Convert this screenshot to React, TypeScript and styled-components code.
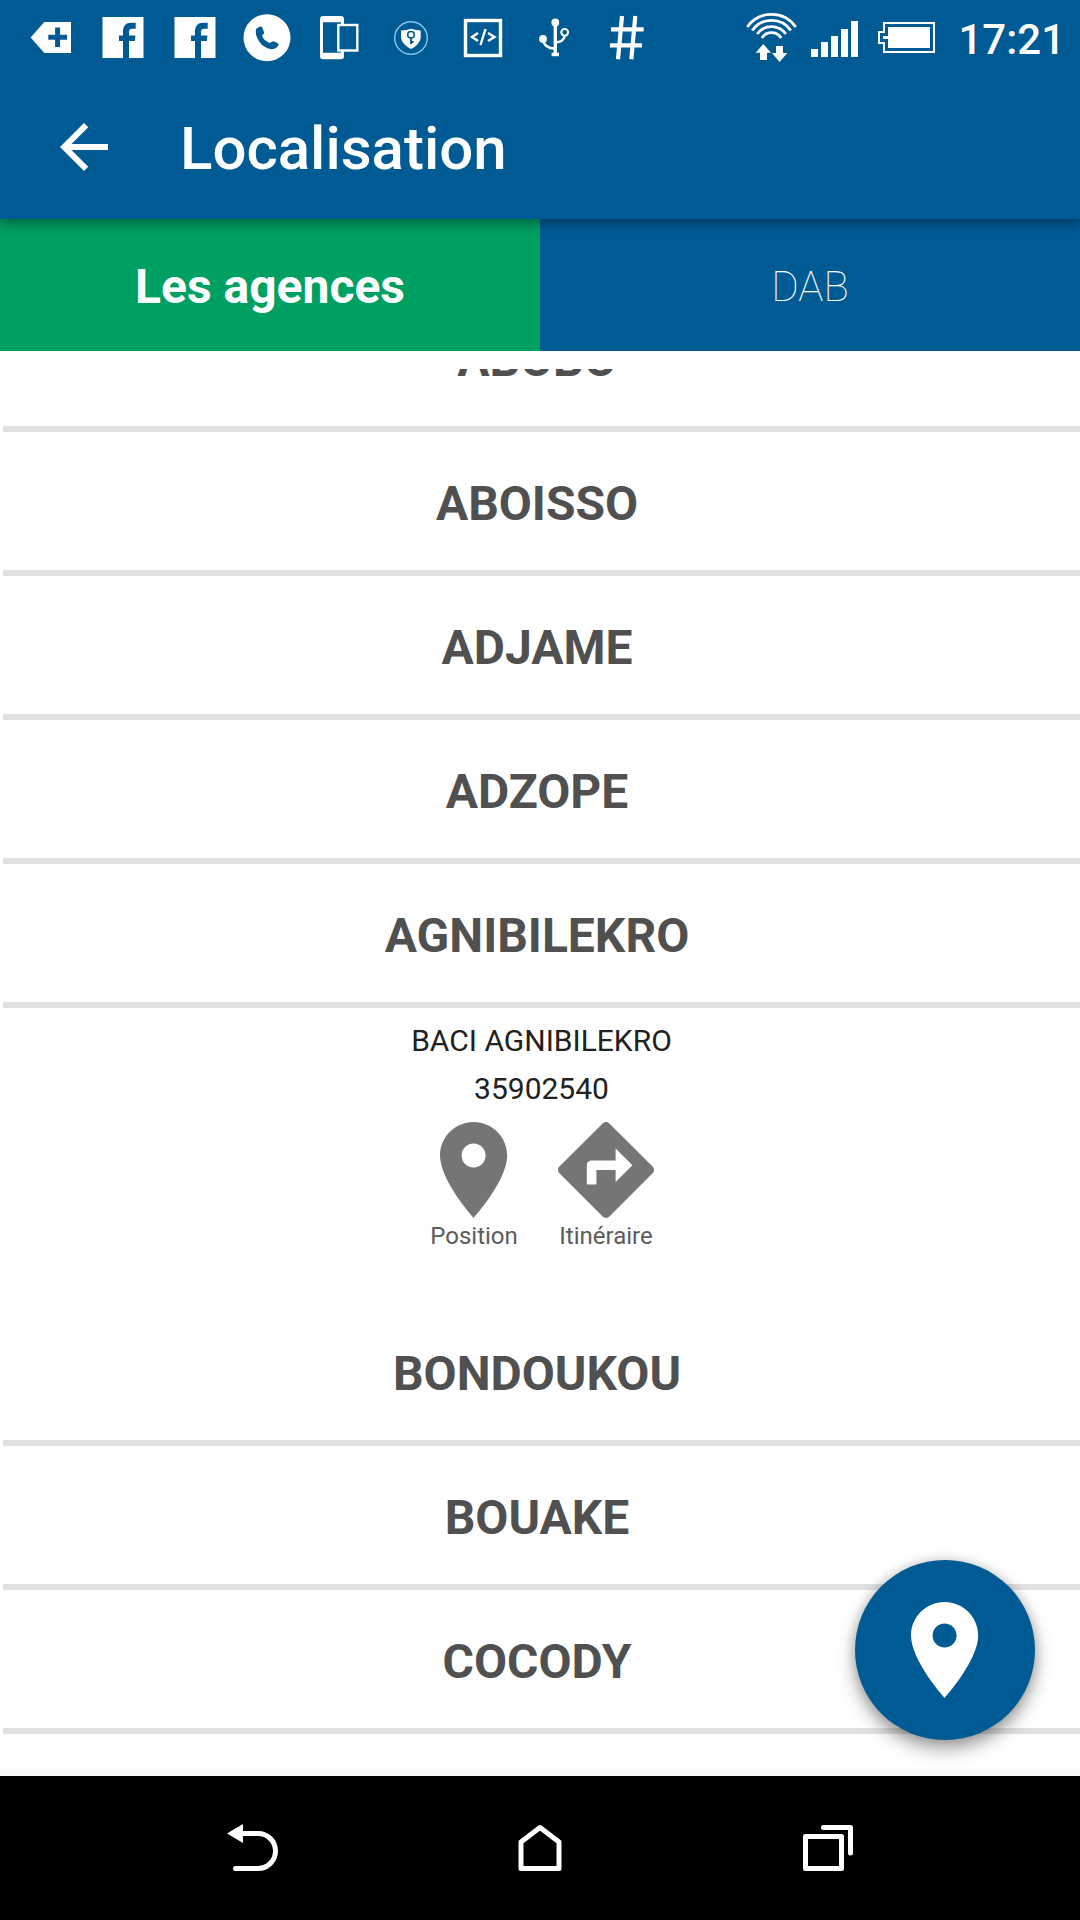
import React, { useState } from "react";
import styled, { createGlobalStyle } from "styled-components";

const BLUE = "#005a94";
const GREEN = "#009f62";

const GlobalStyle = createGlobalStyle`
  *, *::before, *::after { box-sizing: border-box; }
  body {
    margin: 0;
    background: #fff;
    font-family: Roboto, "Liberation Sans", sans-serif;
  }
  button {
    margin: 0;
    padding: 0;
    border: 0;
    background: none;
    color: inherit;
    font: inherit;
    cursor: pointer;
  }
`;

const Screen = styled.div`
  display: flex;
  flex-direction: column;
  height: 100vh;
  overflow: hidden;
  background: #fff;
`;

const Header = styled.header`
  position: relative;
  z-index: 1;
  background: ${BLUE};
  color: #fff;
  box-shadow: 0 4px 12px rgba(0, 0, 0, 0.4);
`;

const StatusBar = styled.div`
  display: flex;
  align-items: center;
  justify-content: space-between;
  height: 75px;
  padding: 0 15px;
`;

const StatusGroup = styled.div`
  display: flex;
  align-items: center;
`;

const StatusIcon = styled.svg`
  display: block;
  flex: none;
  height: 75px;
`;

const Clock = styled.time`
  padding-top: 4px;
  font-size: 42px;
  font-weight: 500;
  line-height: 48px;
`;

const AppBar = styled.div`
  display: flex;
  align-items: center;
  height: 144px;
`;

const BackButton = styled.button`
  display: flex;
  align-items: center;
  justify-content: center;
  width: 168px;
  height: 144px;
`;

const Title = styled.h1`
  margin: 0;
  padding: 4px 0 0 12px;
  font-size: 60px;
  font-weight: 500;
  line-height: 72px;
`;

const Tabs = styled.div`
  display: grid;
  grid-template-columns: 1fr 1fr;
  flex: none;
`;

const Tab = styled.button<{ $active: boolean }>`
  height: 132px;
  padding-top: 2px;
  background: ${(p) => (p.$active ? GREEN : BLUE)};
  color: #fff;
  font-size: ${(p) => (p.$active ? 48 : 42)}px;
  font-weight: ${(p) => (p.$active ? 700 : 100)};
`;

const Content = styled.main`
  position: relative;
  display: flex;
  flex-direction: column;
  flex: 1;
  min-height: 0;
  padding-top: 18px;
  border-bottom: 6px solid #f9f9f9;
`;

const Viewport = styled.div`
  flex: 1;
  min-height: 0;
  overflow: hidden;
`;

const CityList = styled.ul<{ $scrolled: number }>`
  margin: -${(p) => p.$scrolled}px 0 0;
  padding: 0 0 0 3px;
  list-style: none;
`;

const CityButton = styled.button`
  display: flex;
  align-items: center;
  justify-content: center;
  width: 100%;
  height: 144px;
  padding: 4px 9px 0 0;
  border-bottom: 6px solid #e1e1e1;
  color: #505050;
  font-size: 48px;
  font-weight: 700;
`;

const Details = styled.div`
  display: flex;
  flex-direction: column;
  align-items: center;
  padding: 9px 0 52px;
`;

const DetailLine = styled.p`
  margin: 0;
  color: #212121;
  font-size: 30px;
  line-height: 48px;
`;

const Actions = styled.div`
  display: grid;
  grid-template-columns: 132px 132px;
  padding: 9px 3px 0 0;
`;

const Action = styled.button`
  display: flex;
  flex-direction: column;
  align-items: center;
  gap: 4px;
  color: #5c5c5c;
  font-size: 24px;
  line-height: 28px;
`;

const ActionIcon = styled.svg`
  display: block;
  height: 96px;
  fill: #757575;
`;

const Fab = styled.button`
  position: absolute;
  right: 45px;
  bottom: 30px;
  display: flex;
  align-items: center;
  justify-content: center;
  width: 180px;
  height: 180px;
  border-radius: 50%;
  background: ${BLUE};
  box-shadow: 0 9px 18px rgba(0, 0, 0, 0.36), 0 0 12px rgba(0, 0, 0, 0.16);
`;

const FabIcon = styled(ActionIcon)`
  fill: #fff;
`;

const NavBar = styled.nav`
  display: grid;
  grid-template-columns: repeat(3, 1fr);
  flex: none;
  height: 144px;
  padding: 0 10%;
  background: #000;
`;

const NavButton = styled.button`
  display: flex;
  align-items: center;
  justify-content: center;
`;

const NavIcon = styled.svg`
  width: 72px;
  height: 72px;
  fill: none;
  stroke: #fff;
  stroke-width: 5;
  stroke-linecap: round;
  stroke-linejoin: round;
`;

const PIN = "M12 2C8.13 2 5 5.13 5 9c0 5.25 7 13 7 13s7-7.75 7-13c0-3.87-3.13-7-7-7zm0 9.5c-1.38 0-2.5-1.12-2.5-2.5s1.12-2.5 2.5-2.5 2.5 1.12 2.5 2.5-1.12 2.5-2.5 2.5z";
const DIRECTIONS = "M21.71 11.29l-9-9c-.39-.39-1.02-.39-1.41 0l-9 9c-.39.39-.39 1.02 0 1.41l9 9c.39.39 1.02.39 1.41 0l9-9c.39-.38.39-1.01 0-1.41zM14 14.5V12h-4v3H8v-4c0-.55.45-1 1-1h5V7.5l3.5 3.5-3.5 3.5z";

const Slot = ({ width = 72, children }: { width?: number; children: React.ReactNode }) => (
  <StatusIcon width={width} viewBox={`0 0 ${width} 75`} aria-hidden="true">
    {children}
  </StatusIcon>
);

const TagIcon = () => (
  <Slot>
    <path fill="#fff" d="M15.700 37.500L29.300 22H56V53H29.300Z" />
    <path stroke={BLUE} strokeWidth="5" d="M33.300 37.200H52M42.600 27.500V47" />
  </Slot>
);

const FacebookIcon = () => (
  <Slot>
    <rect x="15.500" y="17" width="41" height="41" fill="#fff" />
    <path
      fill={BLUE}
      d="M36 58V41H32V35.500H36V32C36 25.500 39 22.800 44 22.800H48.700V28.700H45.500C43 28.700 42 29.600 42 32V35.500H48.500L47.800 41H42V58Z"
    />
  </Slot>
);

const PhoneIcon = () => (
  <Slot>
    <circle cx="36" cy="37.700" r="23.500" fill="#fff" />
    <path
      fill={BLUE}
      d="M25.500 28.500L29 26.500Q30.500 26 31.200 27.500L33 32Q33.500 33.500 32.300 34.300L31 35.500Q32.500 40.500 38.500 43L41 41.800Q42 41 43.300 41.600L46.800 43.300Q48 44 47.300 45.500Q45 49.300 40.500 49.300Q32 48 27.500 40.500Q24 34 25 29.500Z"
    />
  </Slot>
);

const DevicesIcon = () => (
  <Slot>
    <path
      fill="#fff"
      fillRule="evenodd"
      d="M20 16H38Q41 16 41 19V56.300Q41 59.300 38 59.300H20Q17 59.300 17 56.300V19Q17 16 20 16ZM20 22.300V52.700H38V22.300Z"
    />
    <rect x="35.300" y="25" width="19" height="25.500" fill={BLUE} stroke="#fff" strokeWidth="2.400" />
  </Slot>
);

const ShieldIcon = () => (
  <Slot>
    <circle cx="36" cy="38" r="16.300" fill="none" stroke="#8cc4f0" strokeWidth="1.400" />
    <path fill="#fff" d="M26 30.500Q31 30.500 36 28.700Q41 30.500 45.700 30.500V38Q44.500 45 36 49Q27.500 45 26 38Z" />
    <circle cx="36" cy="34.800" r="3.300" fill="none" stroke={BLUE} strokeWidth="1.600" />
    <path stroke={BLUE} strokeWidth="1.800" d="M36 38V44M36 42H38.500" />
  </Slot>
);

const CodeIcon = () => (
  <Slot>
    <g fill="none" stroke="#fff">
      <rect x="18.500" y="20.500" width="35" height="35" strokeWidth="3.400" />
      <path strokeWidth="2.400" d="M31 33L25 37L31 41M41 33L47.500 37L41 41M38.500 29L33.500 45" />
    </g>
  </Slot>
);

const UsbIcon = () => (
  <Slot>
    <g fill="none" stroke="#fff" strokeWidth="2.500">
      <path strokeWidth="3.400" d="M36.300 22V54" />
      <path d="M24 40Q25.500 48.500 36 48.700M36.500 42.500Q44.500 42 45.700 36" />
      <circle cx="45.700" cy="32.300" r="3.400" strokeWidth="2" />
    </g>
    <circle cx="36.300" cy="22.500" r="3.900" fill="#fff" />
    <circle cx="24" cy="39" r="3.900" fill="#fff" />
    <rect x="32.600" y="52.700" width="7.400" height="3.500" fill="#fff" />
  </Slot>
);

const HashIcon = () => (
  <Slot>
    <path
      fill="none"
      stroke="#fff"
      strokeWidth="4.200"
      d="M31 16L27 59.300M44.300 16L40.300 59.300M20 29.300H52.700M19 45.300H51"
    />
  </Slot>
);

const WifiIcon = () => (
  <Slot width={65}>
    <g fill="none" stroke="#fff" strokeWidth="2.800">
      <path d="M1.300 27A29.500 29.500 0 0 1 49.700 27" />
      <path d="M6.200 30.500A23.500 23.500 0 0 1 44.800 30.500" />
      <path d="M11.200 34A17.500 17.500 0 0 1 39.800 34" />
      <path d="M15.800 38A11.500 11.500 0 0 1 35.200 38" />
    </g>
    <path fill="#fff" d="M17.300 44L25 52.700H21V60H14V52.700H9.700ZM33.600 62L41.300 53H37V46H30V53H26Z" />
  </Slot>
);

const SignalIcon = () => (
  <Slot width={67}>
    <path fill="#fff" d="M0 49H7V57H0ZM10 42H17V57H10ZM20 36H27V57H20ZM30 29H37V57H30ZM40 21H47V57H40Z" />
  </Slot>
);

const BatteryIcon = () => (
  <Slot width={80}>
    <path fill="none" stroke="#fff" strokeWidth="2" d="M6 23H56V52H6V43H1V32H6Z" />
    <path fill="#fff" d="M10 27H52V48H10V39H5V36H10Z" />
  </Slot>
);

const Pin = ({ as: Icon }: { as: React.ElementType }) => (
  <Icon viewBox="5 2 14 20" aria-hidden="true">
    <path d={PIN} />
  </Icon>
);

type City = { name: string; agency?: { label: string; phone: string } };

const CITIES: City[] = [
  { name: "ABOBO" },
  { name: "ABOISSO" },
  { name: "ADJAME" },
  { name: "ADZOPE" },
  { name: "AGNIBILEKRO", agency: { label: "BACI AGNIBILEKRO", phone: "35902540" } },
  { name: "BONDOUKOU" },
  { name: "BOUAKE" },
  { name: "COCODY" },
];

export default function App() {
  const [tab, setTab] = useState(0);
  const [open, setOpen] = useState("AGNIBILEKRO");

  return (
    <Screen>
      <GlobalStyle />
      <Header>
        <StatusBar>
          <StatusGroup>
            <TagIcon />
            <FacebookIcon />
            <FacebookIcon />
            <PhoneIcon />
            <DevicesIcon />
            <ShieldIcon />
            <CodeIcon />
            <UsbIcon />
            <HashIcon />
          </StatusGroup>
          <StatusGroup>
            <WifiIcon />
            <SignalIcon />
            <BatteryIcon />
            <Clock>17:21</Clock>
          </StatusGroup>
        </StatusBar>
        <AppBar>
          <BackButton aria-label="Retour">
            <svg width="48" height="48" viewBox="4 4 16 16" fill="#fff" aria-hidden="true">
              <path d="M20 11H7.830l5.590-5.590L12 4l-8 8 8 8 1.410-1.410L7.830 13H20v-2z" />
            </svg>
          </BackButton>
          <Title>Localisation</Title>
        </AppBar>
      </Header>

      <Tabs role="tablist">
        {["Les agences", "DAB"].map((label, i) => (
          <Tab key={label} role="tab" aria-selected={tab === i} $active={tab === i} onClick={() => setTab(i)}>
            {label}
          </Tab>
        ))}
      </Tabs>

      <Content>
        <Viewport>
          <CityList $scrolled={81}>
            {CITIES.map(({ name, agency }) => (
              <li key={name}>
                <CityButton aria-expanded={open === name} onClick={() => setOpen(open === name ? "" : name)}>
                  {name}
                </CityButton>
                {agency && open === name && (
                  <Details>
                    <DetailLine>{agency.label}</DetailLine>
                    <DetailLine>{agency.phone}</DetailLine>
                    <Actions>
                      <Action>
                        <Pin as={ActionIcon} />
                        Position
                      </Action>
                      <Action>
                        <ActionIcon viewBox="2 2 20 20" aria-hidden="true">
                          <path d={DIRECTIONS} />
                        </ActionIcon>
                        Itinéraire
                      </Action>
                    </Actions>
                  </Details>
                )}
              </li>
            ))}
          </CityList>
        </Viewport>
        <Fab aria-label="Position">
          <Pin as={FabIcon} />
        </Fab>
      </Content>

      <NavBar>
        <NavButton aria-label="Retour">
          <NavIcon viewBox="0 0 72 72" aria-hidden="true">
            <path d="M26 21.500H42A17.500 17.500 0 0 1 42 56.500H19.500" />
            <path fill="#fff" stroke="none" d="M11 21.500L27 12V31Z" />
          </NavIcon>
        </NavButton>
        <NavButton aria-label="Accueil">
          <NavIcon viewBox="0 0 72 72" aria-hidden="true">
            <path d="M17 30L36 15.500L55 30V56.500H17Z" />
          </NavIcon>
        </NavButton>
        <NavButton aria-label="Applications récentes">
          <NavIcon viewBox="0 0 72 72" aria-hidden="true">
            <path d="M13.500 24.500H49.500V56.500H13.500ZM31.500 15.500H58.500V41" />
          </NavIcon>
        </NavButton>
      </NavBar>
    </Screen>
  );
}
